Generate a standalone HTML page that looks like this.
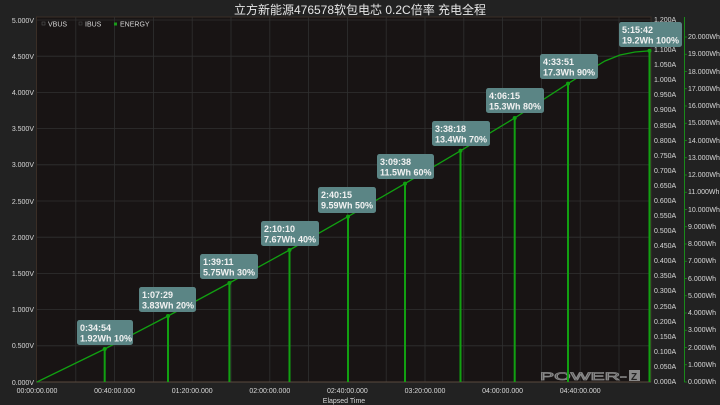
<!DOCTYPE html>
<html><head><meta charset="utf-8"><style>
html,body{margin:0;padding:0;background:#222;}
svg{display:block;font-family:"Liberation Sans","Noto Sans CJK SC",sans-serif;}
.ax{fill:#d8d8d8;font-size:7px;}
.bx{fill:#5b8585;}
.bt{fill:#f2f2f2;font-size:9px;font-weight:bold;}
</style></head><body>
<svg width="720" height="405" viewBox="0 0 720 405" xmlns="http://www.w3.org/2000/svg">
<rect width="720" height="405" fill="#222"/>
<text x="360" y="14" text-anchor="middle" fill="#e6e6e6" font-size="12">立方新能源476578软包电芯 0.2C倍率  充电全程</text>
<rect x="36.5" y="17" width="614.5" height="365" fill="#181414" stroke="#3a2e26" stroke-width="1"/>
<g stroke="#303030" stroke-width="0.8">
<line x1="37" y1="20" x2="651" y2="20"/><line x1="37" y1="56.2" x2="651" y2="56.2"/><line x1="37" y1="92.4" x2="651" y2="92.4"/><line x1="37" y1="128.6" x2="651" y2="128.6"/><line x1="37" y1="164.8" x2="651" y2="164.8"/><line x1="37" y1="201" x2="651" y2="201"/><line x1="37" y1="237.2" x2="651" y2="237.2"/><line x1="37" y1="273.4" x2="651" y2="273.4"/><line x1="37" y1="309.6" x2="651" y2="309.6"/><line x1="37" y1="345.8" x2="651" y2="345.8"/>
<line x1="75.8" y1="17" x2="75.8" y2="382"/><line x1="114.6" y1="17" x2="114.6" y2="382"/><line x1="153.4" y1="17" x2="153.4" y2="382"/><line x1="192.2" y1="17" x2="192.2" y2="382"/><line x1="231" y1="17" x2="231" y2="382"/><line x1="269.8" y1="17" x2="269.8" y2="382"/><line x1="308.6" y1="17" x2="308.6" y2="382"/><line x1="347.4" y1="17" x2="347.4" y2="382"/><line x1="386.2" y1="17" x2="386.2" y2="382"/><line x1="425" y1="17" x2="425" y2="382"/><line x1="463.8" y1="17" x2="463.8" y2="382"/><line x1="502.6" y1="17" x2="502.6" y2="382"/><line x1="541.4" y1="17" x2="541.4" y2="382"/><line x1="580.2" y1="17" x2="580.2" y2="382"/><line x1="619" y1="17" x2="619" y2="382"/>
</g>
<line x1="36" y1="382" x2="651" y2="382" stroke="#5a4a3e" stroke-width="1"/>
<rect x="42" y="22" width="3" height="3" fill="none" stroke="#555" stroke-width="0.6"/><text x="48" y="26.5" class="ax" font-size="6">VBUS</text>
<rect x="79" y="22" width="3" height="3" fill="none" stroke="#444" stroke-width="0.6"/><text x="85" y="26.5" class="ax" font-size="6">IBUS</text>
<rect x="114" y="22.5" width="3" height="3" fill="#1a9a1a"/><text x="120" y="26.5" class="ax" font-size="6">ENERGY</text>
<g class="ax" text-anchor="end">
<text x="34" y="23">5.000V</text><text x="34" y="59">4.500V</text><text x="34" y="95">4.000V</text><text x="34" y="131">3.500V</text><text x="34" y="167">3.000V</text><text x="34" y="204">2.500V</text><text x="34" y="240">2.000V</text><text x="34" y="276">1.500V</text><text x="34" y="312">1.000V</text><text x="34" y="348">0.500V</text><text x="34" y="385">0.000V</text>
</g>
<g class="ax" font-size="6.5">
<text x="654" y="22">1.200A</text><text x="654" y="37">1.150A</text><text x="654" y="52">1.100A</text><text x="654" y="67">1.050A</text><text x="654" y="82">1.000A</text><text x="654" y="97">0.950A</text><text x="654" y="112">0.900A</text><text x="654" y="128">0.850A</text><text x="654" y="143">0.800A</text><text x="654" y="158">0.750A</text><text x="654" y="173">0.700A</text><text x="654" y="188">0.650A</text><text x="654" y="203">0.600A</text><text x="654" y="218">0.550A</text><text x="654" y="233">0.500A</text><text x="654" y="248">0.450A</text><text x="654" y="263">0.400A</text><text x="654" y="278">0.350A</text><text x="654" y="293">0.300A</text><text x="654" y="309">0.250A</text><text x="654" y="324">0.200A</text><text x="654" y="339">0.150A</text><text x="654" y="354">0.100A</text><text x="654" y="369">0.050A</text><text x="654" y="384">0.000A</text>
</g>
<line x1="684.5" y1="17" x2="684.5" y2="382" stroke="#1a8a1a" stroke-width="1"/>
<g stroke="#1a8a1a" stroke-width="0.8">
<line x1="684" y1="382" x2="687" y2="382"/><line x1="684" y1="364.75" x2="687" y2="364.75"/><line x1="684" y1="347.5" x2="687" y2="347.5"/><line x1="684" y1="330.25" x2="687" y2="330.25"/><line x1="684" y1="313" x2="687" y2="313"/><line x1="684" y1="295.75" x2="687" y2="295.75"/><line x1="684" y1="278.5" x2="687" y2="278.5"/><line x1="684" y1="261.25" x2="687" y2="261.25"/><line x1="684" y1="244" x2="687" y2="244"/><line x1="684" y1="226.75" x2="687" y2="226.75"/><line x1="684" y1="209.5" x2="687" y2="209.5"/><line x1="684" y1="192.25" x2="687" y2="192.25"/><line x1="684" y1="175" x2="687" y2="175"/><line x1="684" y1="157.75" x2="687" y2="157.75"/><line x1="684" y1="140.5" x2="687" y2="140.5"/><line x1="684" y1="123.25" x2="687" y2="123.25"/><line x1="684" y1="106" x2="687" y2="106"/><line x1="684" y1="88.75" x2="687" y2="88.75"/><line x1="684" y1="71.5" x2="687" y2="71.5"/><line x1="684" y1="54.25" x2="687" y2="54.25"/><line x1="684" y1="37" x2="687" y2="37"/>
</g>
<g class="ax" font-size="6.5">
<text x="688" y="384">0.000Wh</text><text x="688" y="367">1.000Wh</text><text x="688" y="350">2.000Wh</text><text x="688" y="332">3.000Wh</text><text x="688" y="315">4.000Wh</text><text x="688" y="298">5.000Wh</text><text x="688" y="281">6.000Wh</text><text x="688" y="263">7.000Wh</text><text x="688" y="246">8.000Wh</text><text x="688" y="229">9.000Wh</text><text x="688" y="212">10.000Wh</text><text x="688" y="194">11.000Wh</text><text x="688" y="177">12.000Wh</text><text x="688" y="160">13.000Wh</text><text x="688" y="143">14.000Wh</text><text x="688" y="125">15.000Wh</text><text x="688" y="108">16.000Wh</text><text x="688" y="91">17.000Wh</text><text x="688" y="74">18.000Wh</text><text x="688" y="56">19.000Wh</text><text x="688" y="39">20.000Wh</text>
</g>
<g class="ax" text-anchor="middle" fill="#e0e0e0">
<text x="37" y="393">00:00:00.000</text><text x="114.6" y="393">00:40:00.000</text><text x="192.2" y="393">01:20:00.000</text><text x="269.8" y="393">02:00:00.000</text><text x="347.4" y="393">02:40:00.000</text><text x="425" y="393">03:20:00.000</text><text x="502.6" y="393">04:00:00.000</text><text x="580.2" y="393">04:40:00.000</text>
<text x="344" y="403" font-size="7">Elapsed Time</text>
</g>
<text x="540" y="380" fill="none" stroke="#888" stroke-width="0.8" font-size="11" textLength="87" lengthAdjust="spacingAndGlyphs">POWER-</text>
<rect x="629" y="370" width="11" height="11" fill="#888"/><text x="631" y="380" fill="#222" font-size="10" font-weight="bold">Z</text>
<g stroke="#11a011" stroke-width="2">
<line x1="104.7" y1="349" x2="104.7" y2="382"/><line x1="168" y1="316" x2="168" y2="382"/><line x1="229.4" y1="283" x2="229.4" y2="382"/><line x1="289.5" y1="250" x2="289.5" y2="382"/><line x1="348" y1="216.6" x2="348" y2="382"/><line x1="405" y1="183.6" x2="405" y2="382"/><line x1="460.5" y1="150.8" x2="460.5" y2="382"/><line x1="514.7" y1="118" x2="514.7" y2="382"/><line x1="568" y1="83.6" x2="568" y2="382"/><line x1="649.5" y1="50.8" x2="649.5" y2="382"/>
</g>
<polyline fill="none" stroke="#11a011" stroke-width="1.3" points="37,382 104.7,349 168,316 229.4,283 289.5,250 348,216.6 405,183.6 460.5,150.8 514.7,118 568,83.6 590,70 605,61 620,55 635,52 650,50.8"/>
<g fill="#11a011">
<circle cx="104.7" cy="349" r="2"/><circle cx="168" cy="316" r="2"/><circle cx="229.4" cy="283" r="2"/><circle cx="289.5" cy="250" r="2"/><circle cx="348" cy="216.6" r="2"/><circle cx="405" cy="183.6" r="2"/><circle cx="460.5" cy="150.8" r="2"/><circle cx="514.7" cy="118" r="2"/><circle cx="568" cy="83.6" r="2"/><circle cx="649.5" cy="50.8" r="2"/>
</g>
<g>
<rect class="bx" x="77" y="320" width="56" height="25" rx="2.5"/><text class="bt" x="80" y="331">0:34:54</text><text class="bt" x="80" y="341.5">1.92Wh 10%</text>
<rect class="bx" x="139" y="287" width="57" height="25" rx="2.5"/><text class="bt" x="142" y="298">1:07:29</text><text class="bt" x="142" y="308.5">3.83Wh 20%</text>
<rect class="bx" x="200" y="254" width="58" height="25" rx="2.5"/><text class="bt" x="203" y="265">1:39:11</text><text class="bt" x="203" y="275.5">5.75Wh 30%</text>
<rect class="bx" x="261" y="221" width="58" height="25" rx="2.5"/><text class="bt" x="264" y="232">2:10:10</text><text class="bt" x="264" y="242.5">7.67Wh 40%</text>
<rect class="bx" x="318" y="187" width="58" height="26" rx="2.5"/><text class="bt" x="321" y="198">2:40:15</text><text class="bt" x="321" y="208.5">9.59Wh 50%</text>
<rect class="bx" x="377" y="154" width="57" height="25" rx="2.5"/><text class="bt" x="380" y="165">3:09:38</text><text class="bt" x="380" y="175.5">11.5Wh 60%</text>
<rect class="bx" x="432" y="121" width="58" height="25" rx="2.5"/><text class="bt" x="435" y="132">3:38:18</text><text class="bt" x="435" y="142.5">13.4Wh 70%</text>
<rect class="bx" x="486" y="88" width="58" height="25" rx="2.5"/><text class="bt" x="489" y="99">4:06:15</text><text class="bt" x="489" y="109.5">15.3Wh 80%</text>
<rect class="bx" x="540" y="54" width="58" height="25" rx="2.5"/><text class="bt" x="543" y="65">4:33:51</text><text class="bt" x="543" y="75.5">17.3Wh 90%</text>
<rect class="bx" x="619" y="22" width="63" height="25" rx="2.5"/><text class="bt" x="622" y="33">5:15:42</text><text class="bt" x="622" y="43.5">19.2Wh 100%</text>
</g>
</svg>
</body></html>
